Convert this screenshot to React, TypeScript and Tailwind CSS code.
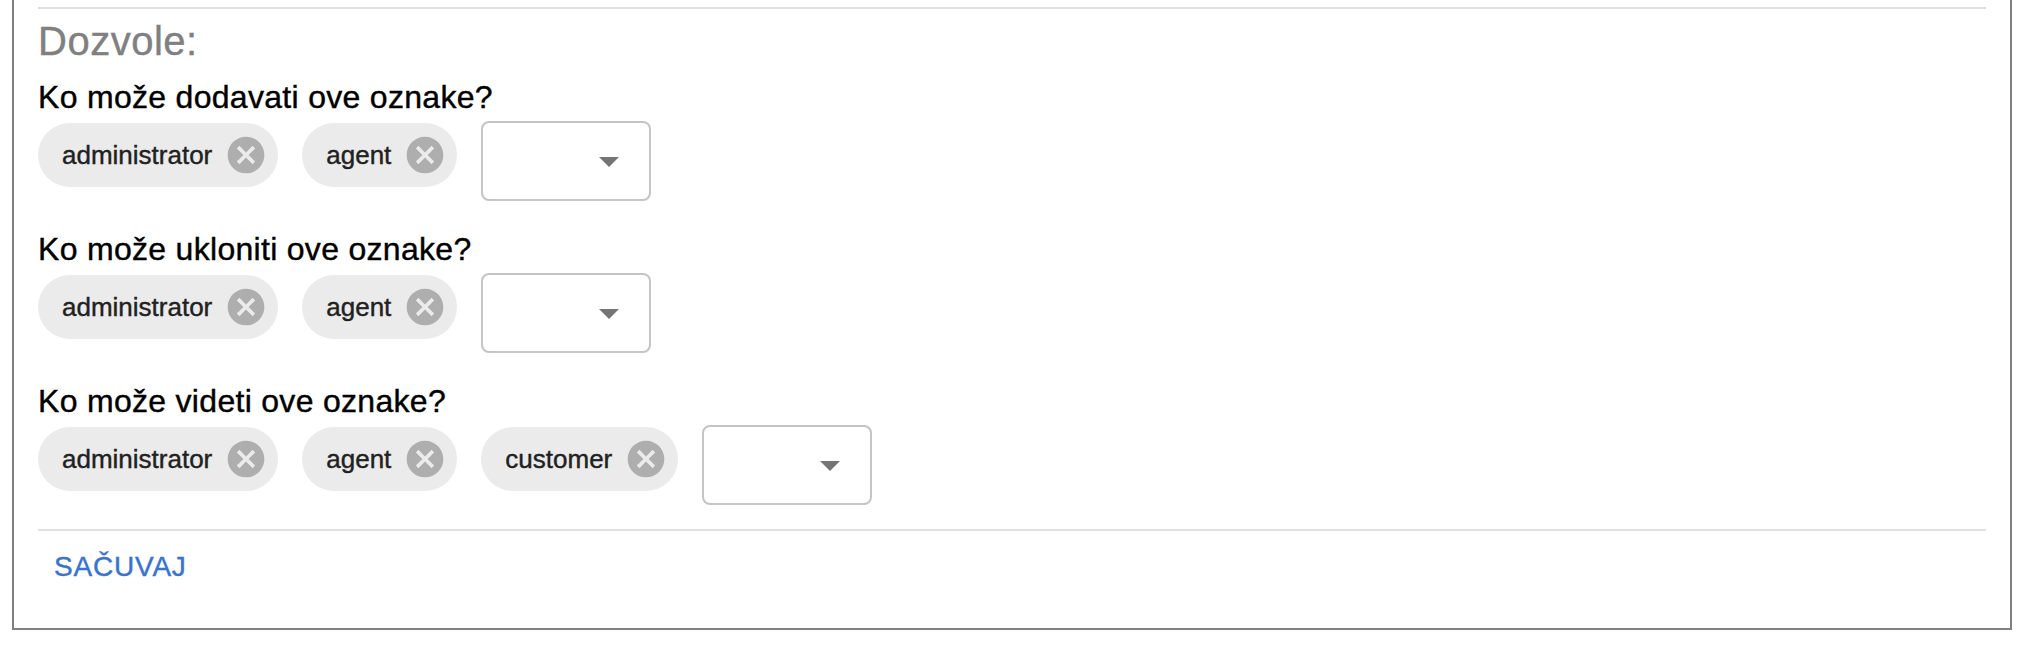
const groups = [
  { question: "Ko može dodavati ove oznake?", roles: ["administrator", "agent"] },
  { question: "Ko može ukloniti ove oznake?", roles: ["administrator", "agent"] },
  { question: "Ko može videti ove oznake?", roles: ["administrator", "agent", "customer"] },
];

function RoleChip({ label }: { label: string }) {
  return (
    <span className="mt-[2px] flex h-16 items-center rounded-full bg-[#ebebeb] pr-[10px] pl-6 text-[26px] text-[#212121]">
      <span>{label}</span>
      <button type="button" aria-label="Ukloni" className="ml-3 text-[#aeaeae]">
        <svg viewBox="0 0 24 24" className="block size-11" fill="currentColor">
          <path d="M12 2C6.47 2 2 6.47 2 12s4.47 10 10 10 10-4.47 10-10S17.53 2 12 2zm5 13.59L15.59 17 12 13.41 8.41 17 7 15.59 10.59 12 7 8.41 8.41 7 12 10.59 15.59 7 17 8.41 13.41 12 17 15.59z" />
        </svg>
      </button>
    </span>
  );
}

function RoleSelect() {
  return (
    <button
      type="button"
      aria-label="Dodaj"
      className="flex h-20 w-[170px] items-center justify-end rounded-lg border-2 border-[#c4c4c4] pr-4"
    >
      <svg viewBox="0 0 24 24" className="block size-12" fill="#757575">
        <path d="M7 10l5 5 5-5z" />
      </svg>
    </button>
  );
}

export default function App() {
  return (
    <div className="h-[652px] w-[2034px] overflow-hidden bg-white px-3 font-['Liberation_Sans',Arial,sans-serif] text-black [-webkit-text-stroke:0.4px_currentColor]">
      <section className="mr-[10px] h-[630px] border-2 border-t-0 border-[#808080] px-6 pt-[7px]">
        <hr className="border-t-2 border-[#e0e0e0]" />
        <h5 className="text-[40px] leading-[64px] tracking-[0.5px] text-[#808080]">Dozvole:</h5>
        {groups.map((group) => (
          <div key={group.question} className="mb-6">
            <p className="text-[32px] leading-[48px] tracking-[0.3px]">{group.question}</p>
            <div className="flex items-start gap-6">
              {group.roles.map((role) => (
                <RoleChip key={role} label={role} />
              ))}
              <RoleSelect />
            </div>
          </div>
        ))}
        <hr className="border-t-2 border-[#e0e0e0]" />
        <button type="button" className="px-4 py-3 text-[28px] leading-[47px] tracking-[0.8px] text-[#3773d0]">
          SAČUVAJ
        </button>
      </section>
    </div>
  );
}
